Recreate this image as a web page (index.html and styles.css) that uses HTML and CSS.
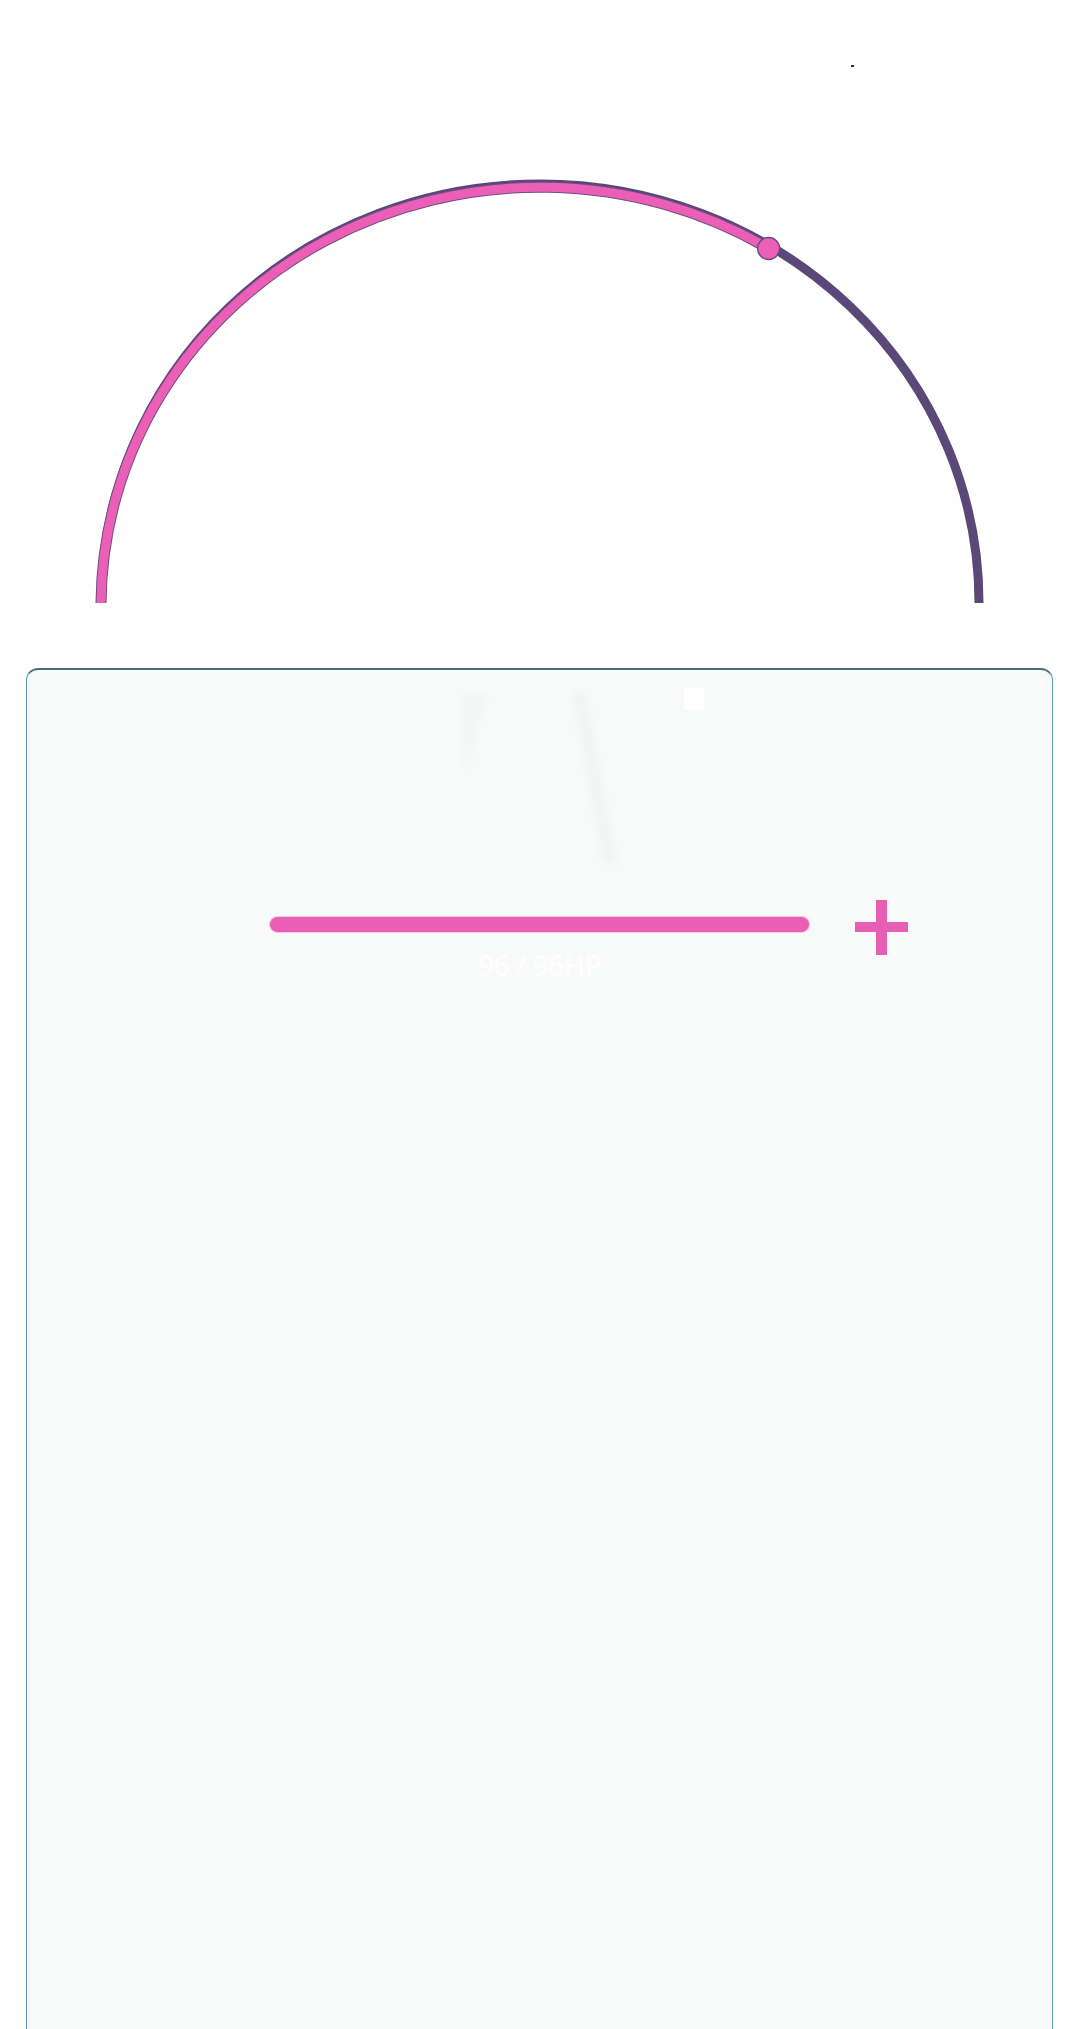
FILE: index.html
```html
<!DOCTYPE html>
<html lang="en">
<head>
<meta charset="utf-8">
<title>HP</title>
<link rel="stylesheet" href="styles.css">
</head>
<body>
<div class="stage">
  <svg class="arc" width="1080" height="668" viewBox="0 0 1080 668">
    <rect x="851" y="65" width="3" height="2" fill="#2a2a2a"/>
    <path d="M 101 603 A 439 419 0 0 1 979 603" fill="none" stroke="#5c4878" stroke-width="9"/>
    <path d="M 101 603 A 439 419 0 0 1 768.6 248.5" fill="none" stroke="#6e4d88" stroke-width="11"/>
    <path d="M 101 603 A 439 419 0 0 1 768.6 248.5" fill="none" stroke="#eb60b6" stroke-width="9"/>
    <circle cx="768.6" cy="248.5" r="11" fill="#eb60b6" stroke="#6a4a84" stroke-width="1.4"/>
  </svg>
</div>
<div class="card">
  <div class="portrait">
    <svg width="1026" height="229" viewBox="0 0 1026 229">
      <defs>
        <filter id="soft" x="-50%" y="-50%" width="200%" height="200%">
          <feGaussianBlur stdDeviation="3"/>
        </filter>
      </defs>
      <g filter="url(#soft)">
        <polygon points="436,23 460,23 441,97 436,97" fill="#f4f5f5"/>
        <polygon points="545,22 559,22 590,193 576,193" fill="#f3f4f4"/>
      </g>
      <rect x="657" y="18" width="20" height="22" fill="#ffffff"/>
    </svg>
  </div>
  <div class="hp-row">
    <div class="hp-bar"></div>
    <div class="plus"><span class="plus-v"></span><span class="plus-h"></span></div>
  </div>
  <div class="hp-text">96 / 96HP</div>
</div>
</body>
</html>
```

FILE: styles.css
```css
html, body {
  margin: 0;
  padding: 0;
  background: #ffffff;
  font-family: "Open Sans", "Noto Sans", sans-serif;
}

body {
  width: 1080px;
  height: 2029px;
  overflow: hidden;
}

.stage {
  height: 668px;
}

.arc {
  display: block;
}

.card {
  margin: 0 27px 0 26px;
  height: 1361px;
  box-sizing: border-box;
  background: #f8f9f9;
  border: 1px solid #5a9db2;
  border-top: 2px solid #4a6d7f;
  border-bottom: none;
  border-radius: 12px 12px 0 0;
}

.portrait {
  height: 230px;
}

.portrait svg {
  display: block;
}

.hp-row {
  display: flex;
  align-items: flex-start;
  padding-left: 243px;
  height: 55px;
}

.hp-bar {
  width: 539px;
  height: 15px;
  margin-top: 17px;
  border-radius: 7.5px;
  background: #ea5fb3;
  box-shadow: 0 0 0 1px rgba(240, 150, 205, 0.5);
}

.plus {
  position: relative;
  width: 53px;
  height: 55px;
  margin-left: 46px;
}

.plus-v {
  position: absolute;
  left: 21px;
  top: 0;
  width: 11px;
  height: 55px;
  background: #e75fb2;
}

.plus-h {
  position: absolute;
  left: 0;
  top: 22px;
  width: 53px;
  height: 10px;
  background: #e75fb2;
}

.hp-text {
  margin-top: -5px;
  text-align: center;
  font-size: 29px;
  line-height: 29px;
  font-weight: 600;
  letter-spacing: -1px;
  color: #fdfdfd;
}
```
